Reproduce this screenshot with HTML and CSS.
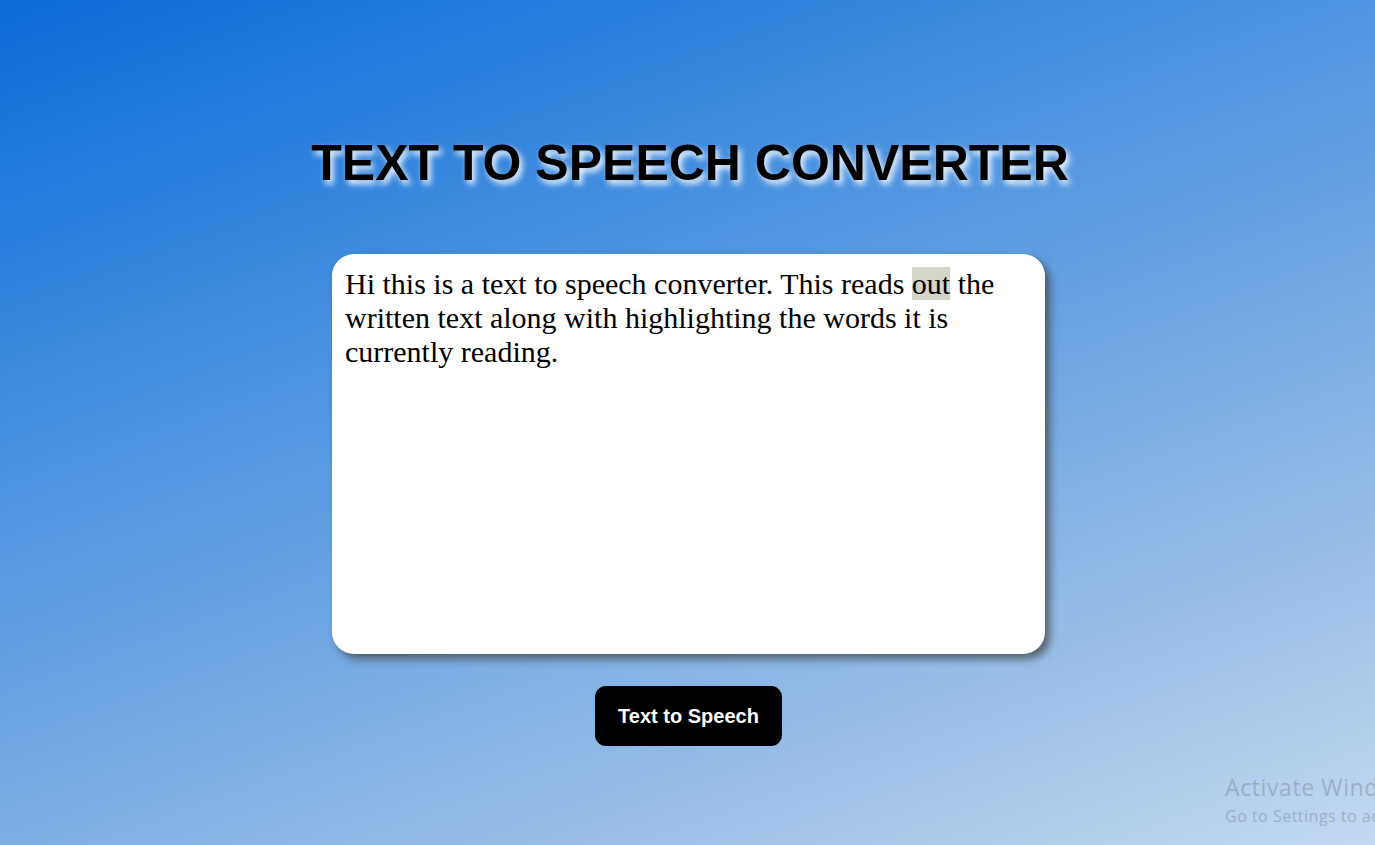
FILE: index.html
```html
<!DOCTYPE html>
<html lang="en">
<head>
<meta charset="utf-8">
<title>Text to Speech Converter</title>
<link rel="stylesheet" href="styles.css">
</head>
<body>
<main class="page">
  <h1 class="title">TEXT TO SPEECH CONVERTER</h1>
  <div class="editor" contenteditable="true">Hi this is a text to speech converter. This reads <span class="hl">out</span> the written text along with highlighting the words it is currently reading.</div>
  <button class="btn" type="button">Text to Speech</button>
</main>
<div class="watermark">
  <div class="wm-title">Activate Windows</div>
  <div class="wm-sub">Go to Settings to activate Windows.</div>
</div>
</body>
</html>
```
FILE: styles.css
```css
html, body {
  margin: 0;
  padding: 0;
  height: 100%;
  overflow: hidden;
}
body {
  background: linear-gradient(160deg, #0a6bd9 0%, #4a92e0 35%, #8ab6e6 70%, #c3d8ef 100%);
  font-family: "Liberation Sans", Arial, sans-serif;
  position: relative;
}
.page {
  display: flex;
  flex-direction: column;
  align-items: center;
  padding-top: 135px;
  padding-left: 2px;
}
.title {
  margin: 0 0 62px 3px;
  font-family: "Liberation Sans", Arial, sans-serif;
  font-weight: bold;
  font-size: 50px;
  line-height: 57px;
  color: #000;
  text-shadow: 3px 4px 6px rgba(255, 255, 255, 0.95);
}
.editor {
  box-sizing: border-box;
  width: 713px;
  height: 400px;
  background: #fff;
  border-radius: 22px;
  box-shadow: 5px 5px 8px rgba(60, 60, 60, 0.7);
  padding: 13px 13px;
  font-family: "Liberation Serif", "Times New Roman", serif;
  font-size: 30px;
  line-height: 34px;
  color: #000;
  outline: none;
}
.hl {
  background: #d4d4c8;
}
.btn {
  margin-top: 32px;
  width: 187px;
  height: 60px;
  border: none;
  border-radius: 11px;
  background: #000;
  color: #fff;
  font-family: "Liberation Sans", Arial, sans-serif;
  font-weight: bold;
  font-size: 20px;
  cursor: pointer;
}
.watermark {
  position: absolute;
  left: 1225px;
  top: 771px;
  white-space: nowrap;
  color: rgba(130, 140, 155, 0.5);
  font-family: "Open Sans", "Noto Sans", sans-serif;
}
.wm-title {
  font-size: 23px;
  line-height: 32px;
  letter-spacing: 0.6px;
}
.wm-sub {
  font-size: 16px;
  line-height: 26px;
  letter-spacing: 0.5px;
}
```
